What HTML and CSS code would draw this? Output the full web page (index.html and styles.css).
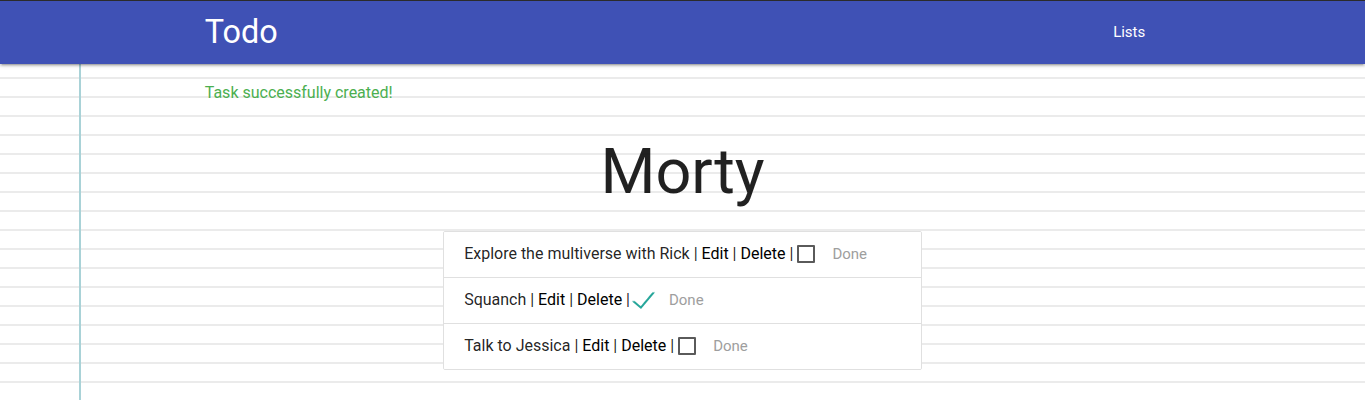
FILE: index.html
```
<!DOCTYPE html>
<html lang="en">
<head>
<meta charset="utf-8">
<title>Todo</title>
<link rel="stylesheet" href="styles.css">
</head>
<body>
<nav class="nav">
  <div class="nav-wrapper">
    <a class="brand-logo" href="#">Todo</a>
    <ul class="nav-links">
      <li><a href="#">Lists</a></li>
    </ul>
  </div>
</nav>
<main class="container">
  <p class="flash">Task successfully created!</p>
  <h1 class="list-title">Morty</h1>
  <ul class="collection">
    <li class="collection-item">Explore the multiverse with Rick | <a href="#">Edit</a> | <a href="#">Delete</a> | <label class="check"><input type="checkbox"><span>Done</span></label></li>
    <li class="collection-item">Squanch | <a href="#">Edit</a> | <a href="#">Delete</a> | <label class="check"><input type="checkbox" checked><span>Done</span></label></li>
    <li class="collection-item">Talk to Jessica | <a href="#">Edit</a> | <a href="#">Delete</a> | <label class="check"><input type="checkbox"><span>Done</span></label></li>
  </ul>
</main>
</body>
</html>
```
FILE: styles.css
```
html {
  font-size: 15px;
  min-height: 100%;
  background-color: #fff;
  background-image:
    linear-gradient(to right, transparent 79px, #a9d2d7 79px, #a9d2d7 81px, transparent 81px),
    repeating-linear-gradient(to bottom, transparent 0, transparent 1px, #ebebeb 1px, #ebebeb 3px, transparent 3px, transparent 19px);
}

body {
  margin: 0;
  font-family: Roboto, "Liberation Sans", sans-serif;
  color: rgba(0, 0, 0, 0.87);
  line-height: 1.5;
}

.nav {
  box-sizing: border-box;
  height: 64px;
  border-top: 1px solid #2b2b2b;
  background: #3f51b5;
  color: #fff;
  line-height: 63px;
  box-shadow: 0 2px 2px 0 rgba(0,0,0,0.14), 0 3px 1px -2px rgba(0,0,0,0.12), 0 1px 5px 0 rgba(0,0,0,0.2);
  position: relative;
  z-index: 1;
}

.nav-wrapper {
  width: 70%;
  margin: 0 auto;
  display: flex;
  justify-content: space-between;
  height: 100%;
}

.brand-logo {
  color: #fff;
  text-decoration: none;
  font-size: 32.4px;
}

.nav-links {
  list-style: none;
  margin: 0;
  padding: 0;
  display: flex;
}

.nav-links a {
  display: block;
  padding: 0 15px;
  color: #fff;
  text-decoration: none;
  font-size: 15px;
}

.container {
  width: 70%;
  margin: 0 auto;
}

.flash {
  margin: 18px 0 0;
  color: #4caf50;
  font-size: 16px;
  line-height: 22.5px;
}

.list-title {
  margin: 32px 0 25.2px;
  font-size: 63px;
  font-weight: 400;
  line-height: 110%;
  text-align: center;
  color: rgba(0, 0, 0, 0.87);
}

.collection {
  width: calc(50% - 1px);
  margin: 0 auto 1rem;
  padding: 0;
  list-style: none;
  border: 1px solid #e0e0e0;
  border-radius: 2px;
  background: #fff;
  overflow: hidden;
}

.collection-item {
  padding: 10px 20px;
  font-size: 16px;
  line-height: 24px;
  height: 25px;
  border-bottom: 1px solid #e0e0e0;
  background: #fff;
}

.collection-item:last-child {
  border-bottom: none;
}

.collection-item a {
  color: #000;
  text-decoration: none;
}

.check input {
  position: absolute;
  opacity: 0;
  pointer-events: none;
}

.check span {
  position: relative;
  display: inline-block;
  height: 25px;
  line-height: 25px;
  padding-left: 35px;
  font-size: 15px;
  color: #9e9e9e;
  vertical-align: top;
}

.check span::before {
  content: "";
  position: absolute;
  top: 0;
  left: 0;
  box-sizing: border-box;
  width: 18px;
  height: 18px;
  margin-top: 3px;
  border: 2px solid #5a5a5a;
  border-radius: 1px;
}

.check input:checked + span::before {
  top: -4px;
  left: -5px;
  width: 12px;
  height: 22px;
  border-top: 2px solid transparent;
  border-left: 2px solid transparent;
  border-right: 2px solid #26a69a;
  border-bottom: 2px solid #26a69a;
  transform: rotate(40deg);
  transform-origin: 100% 100%;
  backface-visibility: hidden;
}
```
